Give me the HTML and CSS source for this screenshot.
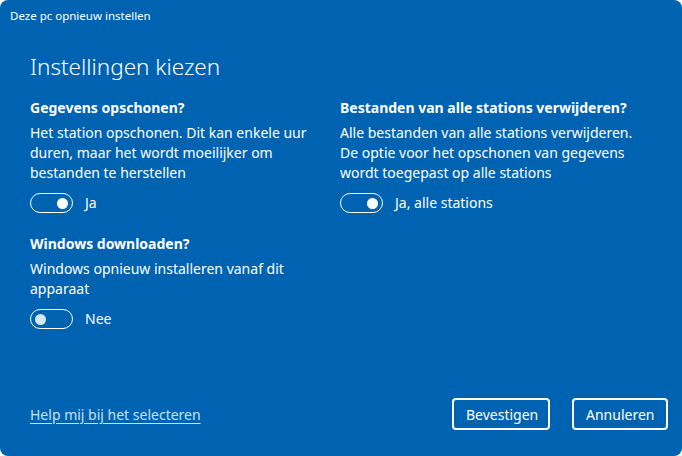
FILE: index.html
```html
<!DOCTYPE html>
<html lang="nl">
<head>
<meta charset="utf-8">
<title>Deze pc opnieuw instellen</title>
<link rel="stylesheet" href="styles.css">
</head>
<body>
<div class="window">
  <div class="titlebar">Deze pc opnieuw instellen</div>
  <div class="content">
    <h1 class="title">Instellingen kiezen</h1>
    <div class="grid">
      <div class="option">
        <h2 class="opt-head">Gegevens opschonen?</h2>
        <p class="opt-text">Het station opschonen. Dit kan enkele uur<br>duren, maar het wordt moeilijker om<br>bestanden te herstellen</p>
        <div class="toggle-row">
          <span class="toggle on"><span class="knob"></span></span>
          <span class="toggle-label">Ja</span>
        </div>
      </div>
      <div class="option">
        <h2 class="opt-head">Bestanden van alle stations verwijderen?</h2>
        <p class="opt-text">Alle bestanden van alle stations verwijderen.<br>De optie voor het opschonen van gegevens<br>wordt toegepast op alle stations</p>
        <div class="toggle-row">
          <span class="toggle on"><span class="knob"></span></span>
          <span class="toggle-label">Ja, alle stations</span>
        </div>
      </div>
      <div class="option">
        <h2 class="opt-head">Windows downloaden?</h2>
        <p class="opt-text">Windows opnieuw installeren vanaf dit<br>apparaat</p>
        <div class="toggle-row">
          <span class="toggle off"><span class="knob"></span></span>
          <span class="toggle-label">Nee</span>
        </div>
      </div>
    </div>
  </div>
  <div class="footer">
    <a class="help" href="#">Help mij bij het selecteren</a>
    <div class="buttons">
      <button class="btn btn-confirm">Bevestigen</button>
      <button class="btn btn-cancel">Annuleren</button>
    </div>
  </div>
</div>
</body>
</html>
```
FILE: styles.css
```css
html, body {
  margin: 0;
  padding: 0;
  background: #ffffff;
}
body {
  font-family: "Noto Sans", "Open Sans", sans-serif;
  color: #ffffff;
}
.window {
  width: 682px;
  height: 456px;
  background: #0063b1;
  border-radius: 8px;
  display: flex;
  flex-direction: column;
  overflow: hidden;
}
.titlebar {
  height: 32px;
  padding-left: 10px;
  font-size: 11.5px;
  line-height: 32px;
  box-sizing: border-box;
}
.content {
  padding: 0 30px;
  flex: 1;
}
.title {
  margin: 20px 0 0 0;
  font-size: 22.5px;
  font-weight: 300;
  line-height: 30px;
}
.grid {
  display: grid;
  grid-template-columns: 310px 1fr;
  row-gap: 21px;
  margin-top: 16px;
}
.opt-head {
  margin: 0;
  font-size: 14px;
  font-weight: 700;
  line-height: 20px;
}
.opt-text {
  margin: 5px 0 0 0;
  font-size: 14px;
  line-height: 20px;
  white-space: nowrap;
}
.toggle-row {
  display: flex;
  align-items: center;
  gap: 12px;
  margin-top: 10px;
  height: 20px;
}
.toggle {
  box-sizing: border-box;
  width: 43px;
  height: 20px;
  border: 1.5px solid #ffffff;
  border-radius: 10px;
  display: flex;
  align-items: center;
  padding: 0 4px;
}
.toggle.on {
  justify-content: flex-end;
}
.toggle .knob {
  width: 11px;
  height: 11px;
  border-radius: 50%;
  background: #ffffff;
}
.toggle.off .knob {
  background: #d6e6f5;
}
.toggle-label {
  font-size: 14px;
  line-height: 20px;
}
.footer {
  display: flex;
  justify-content: space-between;
  align-items: center;
  padding: 0 14px 26px 30px;
}
.help {
  color: #c7e0f4;
  font-size: 14px;
  text-decoration: underline;
  text-underline-offset: 3px;
}
.buttons {
  display: flex;
  gap: 22px;
}
.btn {
  font-family: "Noto Sans", "Open Sans", sans-serif;
  font-size: 14px;
  color: #ffffff;
  background: transparent;
  border: 2px solid #ffffff;
  border-radius: 4px;
  height: 32px;
  padding: 0 12px;
}
.btn-confirm { width: 98px; }
.btn-cancel { width: 96px; }
```
